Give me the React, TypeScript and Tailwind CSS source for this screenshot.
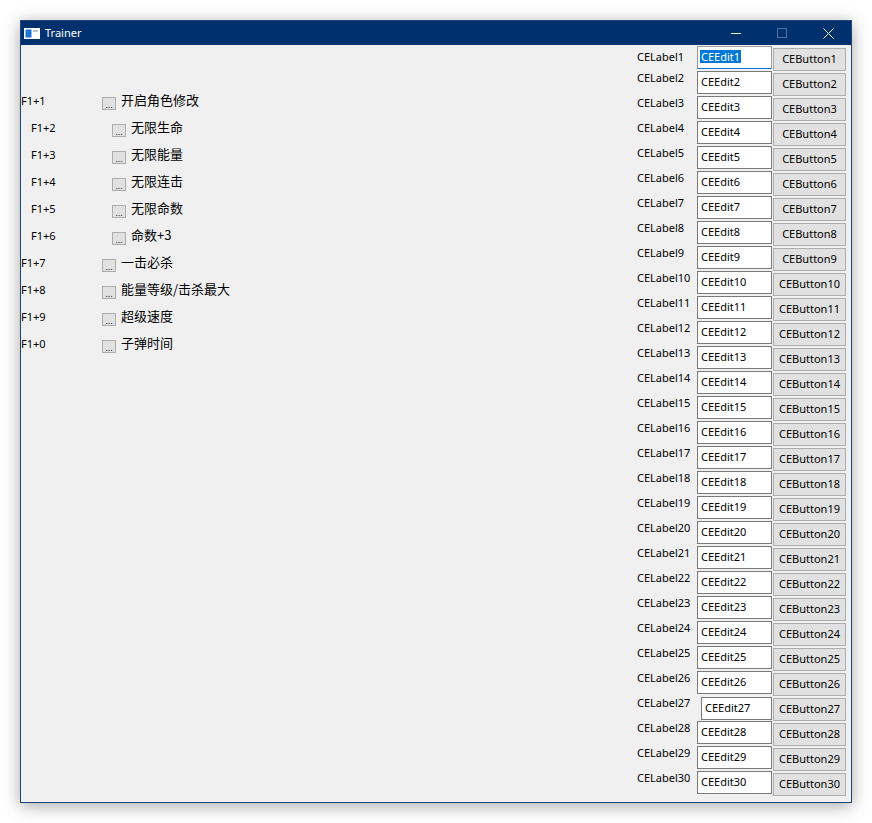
import React from 'react';

const hotkeys = [
  { key: 'F1+1', label: '开启角色修改', indent: false },
  { key: 'F1+2', label: '无限生命', indent: true },
  { key: 'F1+3', label: '无限能量', indent: true },
  { key: 'F1+4', label: '无限连击', indent: true },
  { key: 'F1+5', label: '无限命数', indent: true },
  { key: 'F1+6', label: '命数+3', indent: true },
  { key: 'F1+7', label: '一击必杀', indent: false },
  { key: 'F1+8', label: '能量等级/击杀最大', indent: false },
  { key: 'F1+9', label: '超级速度', indent: false },
  { key: 'F1+0', label: '子弹时间', indent: false },
];

const rows = Array.from({ length: 30 }, (_, i) => i + 1);

const AppIcon = () => (
  <svg width="16" height="11" viewBox="0 0 16 11" className="shrink-0">
    <rect x="0" y="0" width="16" height="11" fill="#ffffff" />
    <rect x="1.5" y="1.5" width="6" height="8" fill="#1a78d4" />
    <rect x="9" y="2.5" width="5" height="1" fill="#7a8aa0" />
  </svg>
);

const TitleBar = () => (
  <div className="h-[24px] bg-[#00306e] flex items-center text-white shrink-0">
    <div className="pl-[3px] flex items-center">
      <AppIcon />
      <span className="ml-[5px] mb-[1px] text-[11px] leading-none">Trainer</span>
    </div>
    <div className="ml-auto flex h-full">
      <div className="w-[46px] h-full flex items-center justify-center">
        <div className="w-[10px] h-px bg-white" />
      </div>
      <div className="w-[46px] h-full flex items-center justify-center">
        <div className="w-[10px] h-[10px] border border-[#4f6f9c]" />
      </div>
      <div className="w-[46px] h-full flex items-center justify-center">
        <svg width="11" height="11" viewBox="0 0 11 11">
          <path d="M0.5 0.5 L10.5 10.5 M10.5 0.5 L0.5 10.5" stroke="#ffffff" strokeWidth="1" />
        </svg>
      </div>
    </div>
  </div>
);

const DotButton = () => (
  <div className="w-[14px] h-[13px] mt-[4px] border border-[#adadad] bg-[#e1e1e1] flex items-end justify-center shrink-0">
    <span className="text-[9px] leading-[8px] text-[#222]">...</span>
  </div>
);

const HotkeyList = () => (
  <div className="flex-1 pt-[43px]">
    {hotkeys.map((h) => (
      <div key={h.key} className={`h-[27px] flex items-center ${h.indent ? 'pl-[10px]' : ''}`}>
        <span className="w-[81px] shrink-0">{h.key}</span>
        <DotButton />
        <span className="ml-[5px] mb-[4px] text-[13px] leading-[18px] font-['Noto_Sans_CJK_SC',sans-serif]">
          {h.label}
        </span>
      </div>
    ))}
  </div>
);

const EditRow = ({ n }: { n: number }) => {
  const focused = n === 1;
  const shifted = n === 27;
  return (
    <div className="h-[25px] flex items-start">
      <span className={`w-[60px] shrink-0 leading-[14px] ${n === 1 ? 'mt-[4px]' : ''}`}>CELabel{n}</span>
      {focused ? (
        <div className="w-[75px] h-[23px] shrink-0 bg-white border border-[#9a9a9a] border-b-[#0078d7] pl-[2px] pt-[2px]">
          <span className="inline-block bg-[#0078d7] text-white leading-[13px] px-[1px]">CEEdit1</span>
        </div>
      ) : (
        <div
          className={`h-[23px] shrink-0 bg-white border border-[#7a7a7a] pl-[3px] pt-[3px] leading-[14px] ${
            shifted ? 'w-[71px] ml-[4px] mt-[1px]' : 'w-[75px]'
          }`}
        >
          CEEdit{n}
        </div>
      )}
      <div className="w-[73px] h-[23px] ml-[1px] mt-[2px] shrink-0 border border-[#adadad] bg-[#e1e1e1] flex items-center justify-center">
        CEButton{n}
      </div>
    </div>
  );
};

export default function App() {
  return (
    <div className="min-h-screen bg-white p-[20px] font-['Noto_Sans','Liberation_Sans',sans-serif] text-[11px] text-black">
      <div className="w-[832px] h-[783px] border border-[#1f4277] flex flex-col shadow-[0_3px_16px_rgba(0,0,0,0.35)]">
        <TitleBar />
        <div className="flex-1 bg-[#f0f0f0] flex">
          <HotkeyList />
          <div className="w-[214px] pt-[1px] pr-[5px]">
            {rows.map((n) => (
              <EditRow key={n} n={n} />
            ))}
          </div>
        </div>
      </div>
    </div>
  );
}
